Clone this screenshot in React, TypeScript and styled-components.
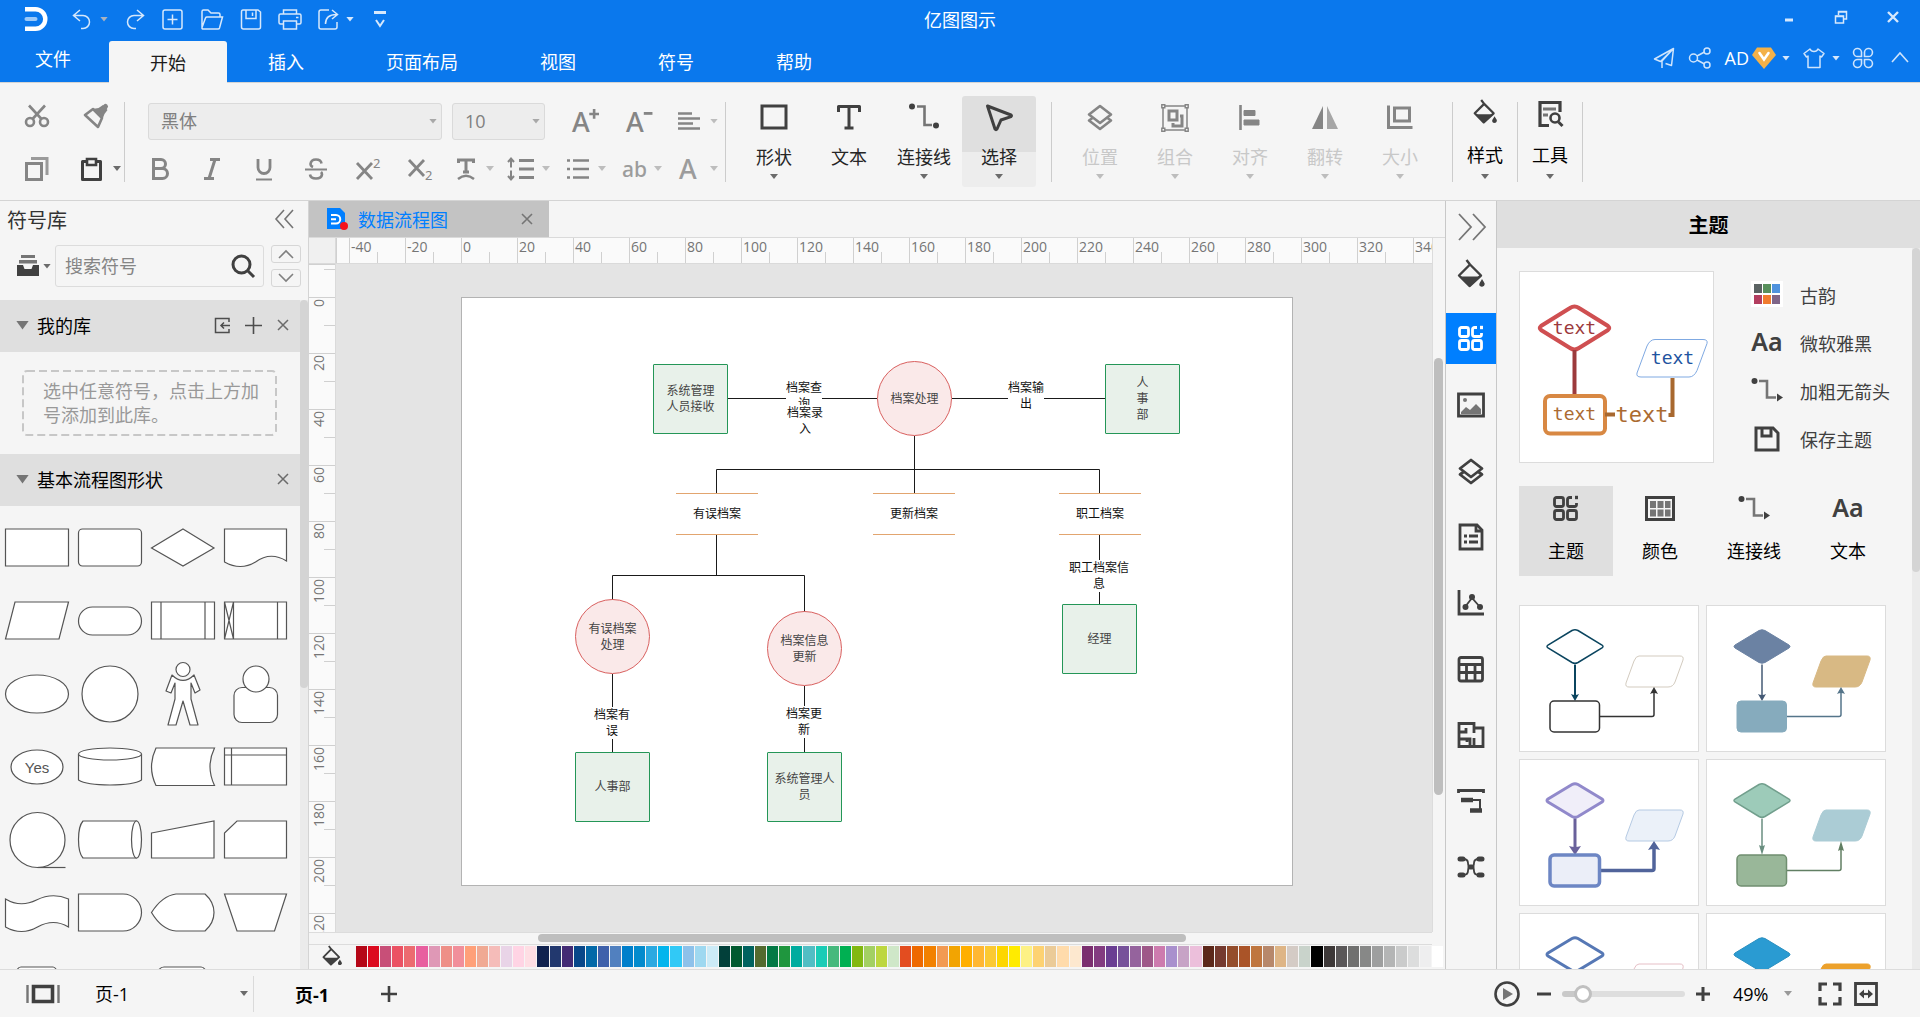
import React from "react";
import styled, { createGlobalStyle, css } from "styled-components";

const BLUE = "#0a78ed";
const PANEL = "#f5f5f5";
const LINE = "#d4d4d4";
const HEAD = "#dfdfdf";
const DARK = "#404040";
const GREY = "#858585";

const GlobalStyle = createGlobalStyle`
  * { box-sizing: border-box; }
  body { margin: 0; background: ${PANEL}; overflow: hidden; }
  body, button, input, select {
    font-family: "Open Sans", "Noto Sans CJK SC", sans-serif;
    font-size: 18px;
    color: #1c1c1c;
  }
  button { border: 0; padding: 0; background: none; cursor: pointer; white-space: nowrap; }
  svg { display: block; flex: none; overflow: visible; }
`;

const Shell = styled.div`
  display: flex;
  flex-direction: column;
  height: 100vh;
`;

/* ---------- generic pieces ---------- */

type IconProps = {
  w?: number;
  h?: number;
  box?: string;
  sw?: number;
  color?: string;
  children: React.ReactNode;
};

const Icon = ({ w = 24, h = w, box = "0 0 24 24", sw = 2, color = "currentColor", children }: IconProps) => (
  <svg width={w} height={h} viewBox={box} fill="none" stroke={color} strokeWidth={sw} aria-hidden="true">
    {children}
  </svg>
);

const Caret = styled.span<{ $color?: string }>`
  width: 8px;
  height: 5px;
  flex: none;
  background: ${(p) => p.$color ?? "#6b6b6b"};
  clip-path: polygon(0 0, 100% 0, 50% 100%);
`;

const Divider = styled.div`
  width: 1px;
  height: 80px;
  flex: none;
  background: #cccccc;
`;

const Select = styled.select`
  appearance: none;
  height: 28px;
  border: 0;
  background: transparent;
  outline: none;
`;

/* ---------- title bar ---------- */

const TitleBar = styled.header`
  flex: none;
  background: ${BLUE};
  border-bottom: 1px solid ${LINE};
  color: #fff;
`;

const TitleRow = styled.div`
  display: grid;
  grid-template-columns: 1fr auto 1fr;
  height: 41px;
`;

const QuickBar = styled.div`
  display: flex;
  align-items: center;
  gap: 13px;
  height: 38px;
  padding-left: 25px;
`;

const LogoBox = styled.div`
  width: 32px;
`;

const QuickButton = styled.button`
  display: flex;
  align-items: center;
  justify-content: flex-start;
  gap: 4px;
  color: #d6e8fc;
`;

const Title = styled.h1`
  margin: 0;
  font-size: 18px;
  font-weight: 400;
  line-height: 41px;
`;

const WindowButtons = styled.div`
  display: flex;
  justify-content: flex-end;
  height: 34px;
  padding-right: 1px;
`;

const WindowButton = styled.button`
  display: flex;
  align-items: center;
  justify-content: center;
  width: 52px;
  color: #d6e8fc;
`;

const TabRow = styled.nav`
  display: flex;
  height: 41px;
`;

const MenuTab = styled.button<{ $active?: boolean }>`
  height: 41px;
  padding: 2px 41px 0;
  line-height: 39px;
  color: ${(p) => (p.$active ? "#1c1c1c" : "#fff")};
  ${(p) => p.$active && css`
    height: 42px;
    background: ${PANEL};
    border-radius: 3px 3px 0 0;
  `}
`;

const FileTab = styled.button`
  width: 109px;
  height: 36px;
  padding-right: 3px;
  line-height: 36px;
  color: #fff;
`;

const AccountBar = styled.div`
  display: flex;
  align-items: center;
  gap: 13px;
  height: 34px;
  margin-left: auto;
  padding-right: 10px;
`;

const AccountButton = styled.button<{ $gap?: number }>`
  display: flex;
  align-items: center;
  gap: ${(p) => p.$gap ?? 7}px;
  color: #cfe4fc;
`;

const UserName = styled.span`
  color: #fff;
  margin-right: -3px;
`;

const Logo = () => (
  <svg width="22" height="24" viewBox="0 0 22 24" fill="none" aria-hidden="true">
    <path d="M0 2.200h10.500a9.800 9.800 0 0 1 0 19.600H0" stroke="#fff" strokeWidth="4.400" />
    <path d="M1.500 12h9" stroke="#9cc9f8" strokeWidth="4" strokeLinecap="round" />
  </svg>
);

const quickIcons: { name: string; caret?: string; draw: React.ReactNode }[] = [
  { name: "撤销", caret: "#a9b2bf", draw: <path d="M10 3 3.500 8.500 10 14M4 8.500h9a6.500 6.500 0 0 1 0 13h-2" /> },
  { name: "重做", draw: <path d="m16 3 6.500 5.500L16 14M22 8.500h-9a6.500 6.500 0 0 0 0 13h2" /> },
  { name: "新建", draw: <><rect x="3" y="3" width="19" height="19" rx="2" /><path d="M12.500 7.500v10M7.500 12.500h10" /></> },
  { name: "打开", draw: <path d="M3 20V4.500Q3 3 4.500 3H9l3 3h7.500Q21 6 21 7.500V10M3 20.500 6.500 11q.4-1 1.500-1h15.500L20.500 21q-.3 1-1.500 1H4.500Q2.500 22 3 20.500Z" /> },
  { name: "保存", draw: <><path d="M5 3h15l2.500 2v15q0 2-2 2h-15q-2 0-2-2V5q0-2 1.500-2Z" /><path d="M8 3v8.500h10V3M14.500 5.500v3.500" /></> },
  { name: "打印", draw: <><path d="M6.500 7V3h13v4M6.500 17H3.500q-1.500 0-1.500-1.500v-7Q2 7 3.500 7h19Q24 7 24 8.500v7q0 1.500-1.500 1.500h-3" /><path d="M6.500 14h13v8h-13zM19 10.500h2.500" /></> },
  { name: "导出", caret: "#d6e8fc", draw: <path d="M13 3H5Q3 3 3 5v15q0 2 2 2h14q2 0 2-2v-5M9.500 17q0-9.500 11-9.500M16 3l5.500 4.500L16 12" /> },
];

const Header = () => (
  <TitleBar>
    <TitleRow>
      <QuickBar>
        <LogoBox><Logo /></LogoBox>
        {quickIcons.map((q) => (
          <QuickButton key={q.name} aria-label={q.name}>
            <Icon w={26} h={25} box="0 0 26 25" sw={1.5}>{q.draw}</Icon>
            {q.caret && <Caret $color={q.caret} />}
          </QuickButton>
        ))}
        <QuickButton aria-label="自定义">
          <Icon w={26} h={25} box="0 0 26 25" sw={2}><path d="M7 5.500h12" strokeWidth="3" /><path d="m9 13 4 6 4-6" /></Icon>
        </QuickButton>
      </QuickBar>
      <Title>亿图图示</Title>
      <WindowButtons>
        <WindowButton aria-label="最小化"><Icon w={14} h={14} box="0 0 14 14" sw={3}><path d="M3 10h8" /></Icon></WindowButton>
        <WindowButton aria-label="还原"><Icon w={14} h={14} box="0 0 14 14" sw={1.5}><path d="M1.500 6h8v7h-8z" /><path d="M1.500 6.500h8M4.500 5V1.500h8V9H10M4.500 2h8" /></Icon></WindowButton>
        <WindowButton aria-label="关闭"><Icon w={14} h={14} box="0 0 14 14" sw={2.4}><path d="m2 2 10 10M12 2 2 12" /></Icon></WindowButton>
      </WindowButtons>
    </TitleRow>
    <TabRow>
      <FileTab>文件</FileTab>
      <MenuTab $active>开始</MenuTab>
      {["插入", "页面布局", "视图", "符号", "帮助"].map((t) => <MenuTab key={t}>{t}</MenuTab>)}
      <AccountBar>
        <AccountButton aria-label="发送">
          <Icon w={22} h={22} box="0 0 22 22" sw={1.5}><path d="M20.500 1.500 1.500 12l6 2.500zM20.500 1.500 7.500 14.500M20.500 1.500l-2 17-6-2M20.500 1.500 9 14v7" strokeLinejoin="round" /></Icon>
        </AccountButton>
        <AccountButton aria-label="分享">
          <Icon w={24} h={22} box="0 0 24 22" sw={1.5}><circle cx="5.500" cy="11" r="4" /><circle cx="19" cy="4" r="3" /><circle cx="19" cy="18" r="3" /><path d="m9 9 7.500-4M9 13l7.500 4" /></Icon>
        </AccountButton>
        <AccountButton $gap={6}>
          <UserName>AD</UserName>
          <svg width="24" height="22" viewBox="0 0 24 22" fill="none" aria-hidden="true">
            <path d="M5 .5h14l5 7.500-12 14L0 8z" fill="#f3b148" />
            <path d="m7.500 6 4.500 6.500L16.500 6" stroke="#fff" strokeWidth="2.600" strokeLinecap="round" />
          </svg>
          <Caret $color="#d6e8fc" />
        </AccountButton>
        <AccountButton aria-label="皮肤">
          <Icon w={22} h={22} box="0 0 22 22" sw={1.5}><path d="m7 2-6 4.500L3.500 10 5 9v11.500h12V9l1.500 1L21 6.500 15 2q-1 2.500-4 2.500T7 2Z" strokeLinejoin="round" /></Icon>
          <Caret $color="#d6e8fc" />
        </AccountButton>
        <AccountButton aria-label="应用">
          <Icon w={20} h={22} box="0 0 20 22" sw={1.6}>
            <path d="M8.500 9.500H5A4 4 0 1 1 8.500 5zM11.500 9.500H15A4 4 0 1 0 11.500 5zM8.500 12.500H5A4 4 0 1 0 8.500 17zM11.500 12.500H15A4 4 0 1 1 11.500 17z" />
          </Icon>
        </AccountButton>
        <AccountButton aria-label="收起功能区">
          <Icon w={24} h={22} box="0 0 24 22" sw={1.6}><path d="m6 15 8-9 8 9" /></Icon>
        </AccountButton>
      </AccountBar>
    </TabRow>
  </TitleBar>
);

/* ---------- ribbon ---------- */

const Ribbon = styled.div`
  flex: none;
  display: flex;
  align-items: center;
  height: 118px;
  border-bottom: 1px solid ${LINE};
  background: ${PANEL};
`;

const Clipboard = styled.div`
  display: grid;
  grid-template-columns: 49px 40px;
  grid-template-rows: 28px 26px;
  column-gap: 7px;
  row-gap: 26px;
  width: 124px;
  padding-left: 25px;
`;

const ToolButton = styled.button<{ $dark?: boolean }>`
  display: flex;
  align-items: center;
  gap: 8px;
  color: ${(p) => (p.$dark ? DARK : GREY)};
`;

const FontGroup = styled.div`
  display: flex;
  flex-direction: column;
  gap: 17px;
  margin-left: 23px;
  padding-right: 7px;
  width: 577px;
`;

const FontRow = styled.div`
  display: flex;
  align-items: center;
  justify-content: space-between;
`;

const PickerPair = styled.div`
  display: flex;
  gap: 10px;
`;

const Picker = styled.label<{ $w: number }>`
  display: flex;
  align-items: center;
  width: ${(p) => p.$w}px;
  height: 37px;
  padding: 0 4px 0 12px;
  border: 1px solid #dadada;
  border-radius: 3px;
  background: #ededed;
  select { flex: 1; min-width: 0; color: #808080; padding: 0; }
`;

const FormatSet = styled.div`
  display: flex;
  align-items: center;
  gap: 28px;
`;

const DropSet = styled.div`
  display: flex;
  gap: 16px;
`;

const BigGroup = styled.div`
  display: flex;
  gap: 1px;
  padding: 0 15px 0 11px;
`;

const BigButton = styled.button<{ $active?: boolean; $narrow?: boolean; $muted?: boolean }>`
  display: flex;
  flex-direction: column;
  align-items: center;
  width: ${(p) => (p.$narrow ? 64 : 74)}px;
  height: 91px;
  padding-top: ${(p) => (p.$narrow ? 3 : 7)}px;
  border-radius: 3px;
  color: ${(p) => (p.$muted ? GREY : DARK)};
  ${(p) => p.$active && css`background: linear-gradient(#dfdfdf 56px, #ededed 56px);`}
`;

const BigLabel = styled.span<{ $muted?: boolean; $narrow?: boolean }>`
  margin: ${(p) => (p.$narrow ? "11px 0 4px" : "9px 0 2px")};
  line-height: 30px;
  color: ${(p) => (p.$muted ? "#c8c8c8" : p.$narrow ? "#000" : "#262626")};
`;

const bucket = (
  <>
    <path d="M9.500 0 13 4.500 24 15.500 12.500 26 2 15.500 13 4.500" strokeLinejoin="round" />
    <path d="M3 16.500h20.500L12.500 27z" fill="currentColor" stroke="none" />
    <path d="M25 19q5 7 0 7.500t0-7.500Z" fill="currentColor" stroke="none" />
    <circle cx="25" cy="24" r="2.500" fill="currentColor" stroke="none" />
  </>
);

const layers = (
  <>
    <path d="M14 3 25 11.500 14 20 3 11.500z" strokeLinejoin="round" />
    <path d="m6.500 15-3.500 2.500L14 26l11-8.500-3.500-2.500" strokeLinejoin="round" />
  </>
);

type Big = { label: string; caret?: boolean; active?: boolean; draw: React.ReactNode };

const insertTools: Big[] = [
  { label: "形状", caret: true, draw: <rect x="2" y="3" width="24" height="22" strokeWidth="3" /> },
  { label: "文本", draw: <path d="M3.500 9V3.500h21V9M14 3.500v22M9.500 25h9" strokeWidth="3" strokeLinejoin="round" /> },
  { label: "连接线", caret: true, draw: <><path d="M7 3.500h7.500V22H22" strokeWidth="2.600" stroke="#757575" /><circle cx="2" cy="3.500" r="3" fill="currentColor" stroke="none" /><circle cx="26" cy="22.500" r="3" fill="currentColor" stroke="none" /></> },
  { label: "选择", caret: true, active: true, draw: <path d="M2.500 3 26 12q1 .8 0 1.600L16 17l-4 9q-1 1.500-2 0z" strokeWidth="3" strokeLinejoin="round" /> },
];

const arrangeTools: Big[] = [
  { label: "位置", caret: true, draw: layers },
  { label: "组合", caret: true, draw: <><path d="M2 3h24v24H2z" strokeWidth="1.500" /><path d="M8 8h8v9H8zM19 13h2v10h-9v-3" strokeWidth="3" /><path d="M.8 1.800h3v3h-3zM24.200 1.800h3v3h-3zM.8 25.200h3v3h-3zM24.200 25.200h3v3h-3z" strokeWidth="1.400" fill={PANEL} /></> },
  { label: "对齐", caret: true, draw: <><path d="M4.500 2v25" /><path d="M8 7.500h11v5H8zM8 17h15v5H8z" fill="currentColor" strokeWidth="1" /></> },
  { label: "翻转", caret: true, draw: <><path d="M12 3v23H1z" fill="currentColor" stroke="none" /><path d="M16 3v23h11z" fill="#a6a6a6" stroke="none" /></> },
  { label: "大小", caret: true, draw: <><path d="M8.500 5h15v13h-15z" strokeWidth="3" /><path d="M2.500 2.500v22h24" strokeWidth="3" /></> },
];

const styleTool = <g transform="translate(2 1) scale(.86)">{bucket}</g>;
const toolTool = (
  <>
    <path d="M13 26.500H4v-23h20V13" strokeWidth="3.200" />
    <path d="M7 10h13M7 16h5" strokeWidth="3" stroke="#757575" />
    <circle cx="19" cy="19" r="4.500" />
    <path d="m22.500 23 4 4" strokeWidth="3" />
  </>
);

const BigTool = ({ t, muted, narrow }: { t: Big; muted?: boolean; narrow?: boolean }) => (
  <BigButton $active={t.active} $muted={muted} $narrow={narrow}>
    <Icon w={28} h={30} box="0 0 28 30" sw={2.6}>{t.draw}</Icon>
    <BigLabel $muted={muted} $narrow={narrow}>{t.label}</BigLabel>
    {t.caret && <Caret $color={muted ? "#bdbdbd" : "#6b6b6b"} />}
  </BigButton>
);

const glyph = { fontFamily: '"Noto Sans", sans-serif', stroke: "none", fill: "currentColor" };

const formatIcons: { name: string; draw: React.ReactNode }[] = [
  { name: "加粗", draw: <path d="M5.500 2.500H13a4.500 4.500 0 0 1 0 9H5.500zM5.500 11.500h9a5 5 0 0 1 0 10h-9z" strokeWidth="3" /> },
  { name: "斜体", draw: <path d="M10 2.500h10M4 21.500h10M15 2.500l-6 19" strokeWidth="3" /> },
  { name: "下划线", draw: <><path d="M6 2v8.500a6 6 0 0 0 12 0V2" strokeWidth="2.800" /><path d="M4 22.500h16" /></> },
  { name: "删除线", draw: <><path d="M17.500 6.500Q17 2.500 12 2.500T6.500 7Q6.500 9 9 10M6 17.500Q6.500 21.500 12 21.500t6-4q0-1.500-1-2.500" strokeWidth="2.600" /><path d="M1 12.500h22" /></> },
  { name: "上标", draw: <><path d="m1 6 15 16M16 6 1 22" strokeWidth="2.800" /><text x="17" y="11" fontSize="13" {...glyph}>2</text></> },
  { name: "下标", draw: <><path d="m1 3 15 16M16 3 1 19" strokeWidth="2.800" /><text x="17" y="23" fontSize="13" {...glyph}>2</text></> },
];

const dropIcons: { name: string; draw: React.ReactNode }[] = [
  { name: "字体颜色", draw: <><path d="M4.500 6V3h15v3M12 3v12M9 15h6" strokeWidth="3" /><path d="M4 22q8-6.500 16 0" strokeWidth="2.400" /></> },
  { name: "行距", draw: <><path d="M9 3.500h15M9 12h15M9 20.500h15" strokeWidth="2.800" /><path d="M1 1.500v9M1 13.500v9M-2 5l3-3.500L4 5M-2 19l3 3.500L4 19" /></> },
  { name: "项目符号", draw: <><path d="M7 3.500h16M7 12h16M7 20.500h16" strokeWidth="2.600" /><path d="M1 3.500h3M1 12h3M1 20.500h3" strokeWidth="2.600" /></> },
  { name: "大小写", draw: <text x="0" y="20" fontSize="21" fontWeight="500" {...glyph} fill="#9c9c9c">ab</text> },
  { name: "高亮", draw: <text x="1" y="22" fontSize="27" fontWeight="500" {...glyph} fill="#9c9c9c">A</text> },
];

const RibbonBar = () => (
  <Ribbon>
    <Clipboard>
      <ToolButton aria-label="剪切">
        <Icon sw={2.6}><circle cx="5" cy="18" r="4" /><circle cx="19" cy="18" r="4" /><path d="M4 1.500 16.500 15M20 1.500 7.500 15" /></Icon>
      </ToolButton>
      <ToolButton aria-label="格式刷">
        <Icon w={28} h={26} box="-2 0 28 26" sw={2.6}><path d="M2 12 10 6l9 9-4 9z" strokeLinejoin="round" /><path d="m9.500 6 10 10 2-5 3-4-4.500-5-4.500 3z" fill="currentColor" stroke="none" /><path d="m19 7 3.500-3.500" strokeWidth="5" strokeLinecap="round" /></Icon>
      </ToolButton>
      <ToolButton aria-label="复制">
        <Icon sw={3}><path d="M1.500 6.500h15v16h-15z" /><path d="M6 1.500h16V18" stroke="#9a9a9a" /></Icon>
      </ToolButton>
      <ToolButton aria-label="粘贴" $dark>
        <Icon sw={3}><path d="M1.500 4.500h18v18h-18z" strokeLinejoin="round" /><path d="M6 2h9v6H6z" fill={PANEL} strokeWidth="2.600" /></Icon>
        <Caret />
      </ToolButton>
    </Clipboard>
    <Divider />
    <FontGroup>
      <FontRow>
        <FormatSet>
          <PickerPair>
            <Picker $w={294}>
              <Select aria-label="字体" defaultValue="黑体"><option>黑体</option></Select>
              <Caret $color="#a8a8a8" />
            </Picker>
            <Picker $w={93}>
              <Select aria-label="字号" defaultValue="10"><option>10</option></Select>
              <Caret $color="#a8a8a8" />
            </Picker>
          </PickerPair>
          <ToolButton aria-label="增大字号"><Icon w={26} box="0 0 24 24"><text x="-1" y="22" fontSize="25" fontWeight="500" {...glyph}>A</text><path d="M15 5.500h9M19.500 1v9" strokeWidth="2.400" /></Icon></ToolButton>
          <ToolButton aria-label="减小字号"><Icon w={26} box="0 0 24 24"><text x="-1" y="22" fontSize="25" fontWeight="500" {...glyph}>A</text><path d="M15.500 5h8" strokeWidth="2.600" /></Icon></ToolButton>
        </FormatSet>
        <ToolButton aria-label="对齐方式">
          <Icon sw={2.6}><path d="M0 4.500h14M0 9.500h22M0 14.500h15M0 19.500h22" /></Icon>
          <Caret $color="#bdbdbd" />
        </ToolButton>
      </FontRow>
      <FontRow>
        <FormatSet>
          {formatIcons.map((f) => <ToolButton key={f.name} aria-label={f.name}><Icon>{f.draw}</Icon></ToolButton>)}
        </FormatSet>
        <DropSet>
          {dropIcons.map((f) => (
            <ToolButton key={f.name} aria-label={f.name}>
              <Icon>{f.draw}</Icon>
              <Caret $color="#bdbdbd" />
            </ToolButton>
          ))}
        </DropSet>
      </FontRow>
    </FontGroup>
    <Divider />
    <BigGroup>{insertTools.map((t) => <BigTool key={t.label} t={t} />)}</BigGroup>
    <Divider />
    <BigGroup>{arrangeTools.map((t) => <BigTool key={t.label} t={t} muted />)}</BigGroup>
    <Divider />
    <BigTool t={{ label: "样式", caret: true, draw: styleTool }} narrow />
    <Divider />
    <BigTool t={{ label: "工具", caret: true, draw: toolTool }} narrow />
    <Divider />
  </Ribbon>
);

/* ---------- symbol library ---------- */

const Body = styled.div`
  flex: 1;
  min-height: 0;
  display: flex;
`;

const Library = styled.aside`
  flex: none;
  display: flex;
  flex-direction: column;
  width: 309px;
  border-right: 1px solid ${LINE};
`;

const LibHead = styled.div`
  display: flex;
  align-items: center;
  justify-content: space-between;
  height: 36px;
  padding: 0 14px 0 7px;
`;

const LibTitle = styled.h2`
  margin: 0;
  font-size: 20px;
  font-weight: 400;
  color: #333;
`;

const SearchRow = styled.div`
  display: flex;
  align-items: center;
  height: 63px;
  padding: 0 7px 5px 17px;
`;

const DrawerButton = styled.button`
  display: flex;
  align-items: center;
  gap: 4px;
  width: 38px;
  color: ${DARK};
`;

const SearchBox = styled.label`
  display: flex;
  align-items: center;
  width: 209px;
  height: 42px;
  padding: 0 8px 0 9px;
  border: 1px solid #dcdcdc;
  border-radius: 3px;
  color: ${DARK};
  input {
    flex: 1;
    min-width: 0;
    padding: 0;
    border: 0;
    background: none;
    outline: none;
  }
  input::placeholder { color: #858585; opacity: 1; }
`;

const StepColumn = styled.div`
  display: flex;
  flex-direction: column;
  gap: 6px;
  margin-left: auto;
`;

const StepButton = styled.button`
  display: flex;
  align-items: center;
  justify-content: center;
  width: 30px;
  height: 18px;
  border: 1px solid #d6d6d6;
  border-radius: 3px;
  color: #808080;
`;

const ScrollArea = styled.div`
  flex: 1;
  min-height: 0;
  display: flex;
`;

const ScrollContent = styled.div`
  flex: 1;
  min-width: 0;
  overflow: hidden;
`;

const Track = styled.div`
  flex: none;
  width: 8px;
  background: #ebebeb;
`;

const Thumb = styled.div<{ $share: number }>`
  height: ${(p) => p.$share}%;
  border-radius: 4px;
  background: #d4d4d4;
`;

const SectionHead = styled.div`
  display: flex;
  align-items: center;
  gap: 8px;
  height: 52px;
  padding: 0 10px 2px 16px;
  background: ${HEAD};
  color: #4d4d4d;
`;

const Fold = styled.span`
  width: 13px;
  height: 9px;
  background: #757575;
  clip-path: polygon(0 0, 100% 0, 50% 100%);
`;

const SectionTitle = styled.h3`
  flex: 1;
  margin: 0;
  font-size: 18px;
  font-weight: 400;
  color: #000;
`;

const SectionTools = styled.div`
  display: flex;
  align-items: center;
  gap: 14px;
  button { color: #4d4d4d; }
`;

const HintArea = styled.div`
  height: 102px;
  padding: 18px 23px 18px 22px;
`;

const Hint = styled.p`
  position: relative;
  margin: 0;
  height: 66px;
  padding: 9px 16px 9px 21px;
  font-size: 18px;
  line-height: 24px;
  color: #999;
  svg { position: absolute; inset: 0; width: 100%; height: 100%; }
`;

const ShapeGrid = styled.div`
  display: grid;
  grid-template-columns: repeat(4, 73px);
  padding-top: 5px;
`;

const ShapeButton = styled.button`
  width: 73px;
  height: 73px;
`;

const shapes: { name: string; draw: React.ReactNode }[] = [
  { name: "流程", draw: <path d="M5.500 18h63v37h-63z" /> },
  { name: "圆角流程", draw: <rect x="5.500" y="18" width="63" height="37" rx="4" /> },
  { name: "判定", draw: <path d="M37 18 68 37 37 55 5.500 37z" /> },
  { name: "文档", draw: <path d="M5.500 18h62v32q-16-10-31 1-15 9-31 0z" /> },
  { name: "数据", draw: <path d="M15 18h53.500L59 55H5.500z" /> },
  { name: "起止", draw: <rect x="5.500" y="23" width="63" height="28" rx="14" /> },
  { name: "子流程", draw: <path d="M5.500 18h63v37h-63zM15 18v37M59 18v37" /> },
  { name: "预处理", draw: <path d="M5.500 18h62v37h-62zM14.500 18v37M58.500 18v37M5.500 18l9 37M14.500 18l-9 37" /> },
  { name: "椭圆", draw: <ellipse cx="37" cy="37" rx="31.500" ry="19" /> },
  { name: "圆", draw: <circle cx="37" cy="37" r="28" /> },
  { name: "人", draw: <><circle cx="37" cy="12.500" r="7" /><path d="M26 18q11 11 22 0l6 15-5 3-4-10v16l7 26h-8L37 44l-7 24h-8l7-26V26l-4 10-5-2z" strokeLinejoin="round" /></> },
  { name: "用户", draw: <><rect x="15" y="30.500" width="43.500" height="35" rx="8" /><circle cx="37" cy="22" r="13" /></> },
  { name: "是", draw: <><ellipse cx="37" cy="37" rx="26" ry="17" /><text x="37" y="43" fontSize="15" textAnchor="middle" fill="#555" stroke="none" fontFamily='"Liberation Sans", sans-serif'>Yes</text></> },
  { name: "数据库", draw: <><path d="M5.500 24v26q8 5 31.500 5t31.500-5V24" /><ellipse cx="37" cy="24" rx="31.500" ry="6" /></> },
  { name: "存储数据", draw: <path d="M10 18h58.500q-9 18.500 0 37.500H10q-9-18.500 0-37.500z" /> },
  { name: "内部存储", draw: <path d="M5.500 18h62v37h-62zM12.500 18v37M5.500 25h62" /> },
  { name: "顺序数据", draw: <><circle cx="37.500" cy="37" r="27.500" /><path d="M37.500 64.500h28" /></> },
  { name: "直接数据", draw: <><path d="M64 18H10Q5.500 23 5.500 36.500T10 55h54" /><ellipse cx="63.500" cy="36.500" rx="5" ry="18.500" /></> },
  { name: "手动输入", draw: <path d="M5.500 30 68 18v37H5.500z" /> },
  { name: "卡片", draw: <path d="M18 18h49.500v37h-62V30z" /> },
  { name: "条带", draw: <path d="M5.500 23q15 9 31 1t32-1v28q-15-9-31 0t-32 0z" /> },
  { name: "延迟", draw: <path d="M5.500 18H50a18.500 18.500 0 0 1 0 37H5.500z" /> },
  { name: "显示", draw: <path d="M30 18h29q9 8 9 18.500T59 55H30Q16 54 5.500 36.500 16 20 30 18z" /> },
  { name: "手动操作", draw: <path d="M5.500 18h62l-12 37H18z" /> },
  { name: "预备", draw: <path d="M16 25q1-7 5-7h32q3 0 5 7v10H16z" /> },
  { name: "空", draw: null },
  { name: "循环", draw: <path d="M11 25q2-7 7-7h37q4 0 6 7v10H11z" /> },
];

const LibraryPanel = () => (
  <Library>
    <LibHead>
      <LibTitle>符号库</LibTitle>
      <button aria-label="收起"><Icon w={20} h={20} box="0 0 20 20" sw={1.6} color="#757575"><path d="M10 1 2 10l8 9M19 1l-8 9 8 9" /></Icon></button>
    </LibHead>
    <SearchRow>
      <DrawerButton aria-label="符号库列表">
        <Icon w={22} h={22} box="0 0 22 22" sw={0}><path d="M4 0h14v3H4zM2 5h18v3.500H2z" fill="#757575" /><path d="M0 10h6l1.500 4h7L16 10h6v11H0z" fill="currentColor" /></Icon>
        <Caret />
      </DrawerButton>
      <SearchBox>
        <input aria-label="搜索符号" placeholder="搜索符号" />
        <Icon sw={3}><circle cx="10.500" cy="10.500" r="8.500" /><path d="m16.500 16.500 6.500 6.500" /></Icon>
      </SearchBox>
      <StepColumn>
        <StepButton aria-label="上一个"><Icon w={16} h={10} box="0 0 16 10" sw={1.6}><path d="m1 9 7-7 7 7" /></Icon></StepButton>
        <StepButton aria-label="下一个"><Icon w={16} h={10} box="0 0 16 10" sw={1.6}><path d="m1 1 7 7 7-7" /></Icon></StepButton>
      </StepColumn>
    </SearchRow>
    <ScrollArea>
      <ScrollContent>
        <SectionHead>
          <Fold />
          <SectionTitle>我的库</SectionTitle>
          <SectionTools>
            <button aria-label="导入"><Icon w={17} h={17} box="0 0 17 17" sw={1.5}><path d="M15 5V1.500H1.500v14H15V12M16 8.500H7M10 5.500 7 8.500l3 3" /></Icon></button>
            <button aria-label="添加"><Icon w={17} h={17} box="0 0 17 17" sw={1.6}><path d="M8.500 0v17M0 8.500h17" /></Icon></button>
            <button aria-label="关闭我的库"><Icon w={14} h={14} box="0 0 14 14" sw={1.5} color="#6b6b6b"><path d="m2 2 10 10M12 2 2 12" /></Icon></button>
          </SectionTools>
        </SectionHead>
        <HintArea>
          <Hint>
            <svg aria-hidden="true"><rect x="1" y="1" width="253" height="64" rx="4" fill="none" stroke="#c7c7c7" strokeWidth="2" strokeDasharray="8 4" /></svg>
            选中任意符号，点击上方加号添加到此库。
          </Hint>
        </HintArea>
        <SectionHead>
          <Fold />
          <SectionTitle>基本流程图形状</SectionTitle>
          <SectionTools>
            <button aria-label="关闭基本流程图形状"><Icon w={14} h={14} box="0 0 14 14" sw={1.5} color="#6b6b6b"><path d="m2 2 10 10M12 2 2 12" /></Icon></button>
          </SectionTools>
        </SectionHead>
        <ShapeGrid>
          {shapes.map((s) => (
            <ShapeButton key={s.name} aria-label={s.name}>
              <svg width="73" height="73" viewBox="0 0 73 73" fill="#fff" stroke="#555" strokeWidth="1.200" aria-hidden="true">{s.draw}</svg>
            </ShapeButton>
          ))}
        </ShapeGrid>
      </ScrollContent>
      <Track><Thumb $share={58} /></Track>
    </ScrollArea>
  </Library>
);

/* ---------- drawing area ---------- */

const Center = styled.main`
  flex: 1;
  min-width: 0;
  display: flex;
  flex-direction: column;
`;

const DocTabs = styled.div`
  flex: none;
  height: 37px;
  border-bottom: 1px solid #dadada;
`;

const DocTab = styled.div`
  display: flex;
  align-items: center;
  width: 240px;
  height: 36px;
  padding: 0 15px 0 18px;
  background: #c3c3c3;
`;

const DocName = styled.button`
  flex: 1;
  margin-left: 11px;
  text-align: left;
  color: #007fff;
`;

const Sheet = styled.div`
  flex: 1;
  min-height: 0;
  display: grid;
  grid-template-columns: 27px 1fr 13px;
  grid-template-rows: 26px 1fr 13px;
`;

const Corner = styled.div`
  background: #f0f0f0;
  border-right: 1px solid #dadada;
  border-bottom: 1px solid #dadada;
`;

const HRuler = styled.div`
  display: flex;
  overflow: hidden;
  background: #fafafa;
  border-bottom: 1px solid #dadada;
`;

const VRuler = styled.div`
  display: flex;
  flex-direction: column;
  overflow: hidden;
  background: #fafafa;
  border-right: 1px solid #dadada;
`;

const HMark = styled.div<{ $len: number }>`
  position: relative;
  flex: none;
  width: ${(p) => p.$len}px;
  padding-left: 1px;
  border-left: 1px solid #d0d0d0;
  font-size: 14px;
  line-height: 18px;
  color: #757575;
  &::after {
    content: "";
    position: absolute;
    left: calc(100% - 28px);
    bottom: 0;
    width: 1px;
    height: 11px;
    background: #d0d0d0;
  }
`;

const VMark = styled.div<{ $len: number }>`
  position: relative;
  flex: none;
  height: ${(p) => p.$len}px;
  padding: 1px 0 0 1px;
  border-top: 1px solid #d0d0d0;
  &::after {
    content: "";
    position: absolute;
    top: calc(100% - 28px);
    right: 0;
    width: 11px;
    height: 1px;
    background: #d0d0d0;
  }
  span {
    display: block;
    writing-mode: vertical-rl;
    transform: rotate(180deg);
    width: 18px;
    font-size: 14px;
    line-height: 18px;
    color: #757575;
  }
`;

const Canvas = styled.div`
  position: relative;
  overflow: hidden;
  background: #e4e4e4;
`;

const Page = styled.div`
  position: absolute;
  left: 125px;
  top: 33px;
  width: 832px;
  height: 589px;
  border: 1px solid #b3b3b3;
  background: #fff;
`;

const Wires = styled.svg`
  position: absolute;
  left: 0;
  top: 0;
`;

type Box = { $x: number; $y: number; $w: number; $h: number };

const place = css<Box>`
  position: absolute;
  left: ${(p) => p.$x}px;
  top: ${(p) => p.$y}px;
  width: ${(p) => p.$w}px;
  height: ${(p) => p.$h}px;
  display: flex;
  align-items: center;
  justify-content: center;
  font-size: 12px;
  line-height: 16px;
  text-align: center;
  white-space: pre-line;
`;

const Entity = styled.div<Box>`
  ${place}
  border: 1px solid #249657;
  border-radius: 1px;
  background: #e8f1ea;
  color: #454545;
`;

const Process = styled.div<Box>`
  ${place}
  border: 1px solid #d9605f;
  border-radius: 50%;
  background: #fae9e9;
  color: #454545;
`;

const Store = styled.div<Box>`
  ${place}
  border: solid #e2a56f;
  border-width: 1px 0;
  color: #111;
`;

const WireLabel = styled.div<Box>`
  ${place}
  color: #111;
  span { background: #fff; }
`;

const VTrack = styled.div`
  display: flex;
  flex-direction: column;
  grid-row: 1 / 3;
  grid-column: 3;
  padding: 120px 2px 137px 1px;
  border-left: 1px solid #dcdcdc;
  background: ${PANEL};
`;

const HTrack = styled.div`
  grid-column: 1 / 3;
  display: flex;
  padding: 1px 246px 2px 229px;
  border-top: 1px solid #dcdcdc;
  border-bottom: 1px solid #dcdcdc;
`;

const ScrollHandle = styled.div`
  flex: 1;
  border-radius: 5px;
  background: #bebebe;
`;

const PaletteBar = styled.div`
  flex: none;
  display: flex;
  align-items: center;
  height: 24px;
  padding: 0 1px 2px 13px;
  color: ${DARK};
`;

const Swatches = styled.div`
  flex: 1;
  display: flex;
  gap: 1px;
  margin-left: 14px;
`;

const Swatch = styled.button<{ $c: string }>`
  flex: 1;
  height: 21px;
  background: ${(p) => p.$c};
`;

const palette = (
  "b50717 dc0a1f c84f78 eb5264 ec6b70 e85f9f df98b6 ee8f87 f18f9b ffa079 f0a993 f5bcb9 e9d4e7 ffd4e4 fedee4 " +
  "10224f 22386e 432b74 084789 0369a8 3f61ab 5180bf 007fcb 038bcd 2ba9e1 03b5ed 31c9f6 8dc1ea 9ed8f0 ccebf7 " +
  "02403a 01592f 00625f 546a2f 037945 1f963e 00ac9f 52bec4 1accb6 46b97d 00b052 82b811 a3d063 bdd73f cfe7c8 " +
  "e34d20 ee6900 f28100 f29a52 f2a402 ffaf00 ffb733 fbc933 fdd600 ffeb00 fdf185 fdd272 ebcb98 ffdbab fde8cf " +
  "7b2f6f 833c80 6a3e92 77529a 95639d 9e5888 cd7bae a990cd c7a3c6 ecbfdb " +
  "5c281a 753a2f 944d2b aa5428 bf763f b7886b deb586 d4cbc5 c9d3cb " +
  "000000 3d3838 5a5758 70706f 878887 9e9f9f b4b5b5 cacbcb dcdddd eeeeef ffffff"
).split(" ");

const range = (from: number, to: number) =>
  Array.from({ length: (to - from) / 20 + 1 }, (_, i) => from + i * 20);

const entities: [number, number, string][] = [
  [191, 66, "系统管理\n人员接收"],
  [643, 66, "人\n事\n部"],
  [600, 306, "经理"],
  [113, 454, "人事部"],
  [305, 454, "系统管理人\n员"],
];
const processes: [number, number, string][] = [
  [415, 63, "档案处理"],
  [113, 301, "有误档案\n处理"],
  [305, 313, "档案信息\n更新"],
];
const stores: [number, string][] = [[214, "有误档案"], [411, "更新档案"], [597, "职工档案"]];
const wireLabels: [number, number, string][] = [
  [302, 82, "档案查\n询"],
  [303, 107, "档案录\n入"],
  [524, 82, "档案输\n出"],
  [597, 262, "职工档案信\n息"],
  [110, 409, "档案有\n误"],
  [302, 408, "档案更\n新"],
];

const DrawingArea = () => (
  <Center>
    <DocTabs>
      <DocTab>
        <svg width="20" height="22" viewBox="0 0 20 22" aria-hidden="true">
          <path d="M0 0h13l5 5v16H0z" fill="#007fff" />
          <path d="M4 7h5a4.200 4.200 0 0 1 0 8.500H4M4 11.300h5" fill="none" stroke="#fff" strokeWidth="2" />
          <circle cx="17" cy="18" r="4" fill="#f5131c" />
        </svg>
        <DocName>数据流程图</DocName>
        <button aria-label="关闭文档"><Icon w={14} h={14} box="0 0 14 14" sw={1.6} color="#757575"><path d="m2 2 10 10M12 2 2 12" /></Icon></button>
      </DocTab>
    </DocTabs>
    <Sheet>
      <Corner />
      <HRuler>
        <HMark $len={13} />
        {range(-40, 340).map((n) => <HMark key={n} $len={56}>{n}</HMark>)}
      </HRuler>
      <VTrack><ScrollHandle /></VTrack>
      <VRuler>
        <VMark $len={33} />
        {range(0, 220).map((n) => <VMark key={n} $len={56}><span>{n}</span></VMark>)}
      </VRuler>
      <Canvas>
        <Page>
          <Wires width="830" height="587" viewBox="0 0 830 587" fill="none" stroke="#1a1a1a" aria-hidden="true">
            <path d="M266 100.500h149M490 100.500h153M452.500 138v57M254.500 196v-24.500h383V196M254.500 236v41.500M150.500 302v-24.500h192V314M150.500 376v78M342.500 388v66M637.500 236v71" />
          </Wires>
          {wireLabels.map(([x, y, t]) => <WireLabel key={t} $x={x} $y={y} $w={80} $h={32}><span>{t}</span></WireLabel>)}
          {entities.map(([x, y, t]) => <Entity key={x + t} $x={x} $y={y} $w={75} $h={70}>{t}</Entity>)}
          {processes.map(([x, y, t]) => <Process key={t} $x={x} $y={y} $w={75} $h={75}>{t}</Process>)}
          {stores.map(([x, t]) => <Store key={t} $x={x} $y={195} $w={82} $h={42}>{t}</Store>)}
        </Page>
      </Canvas>
      <HTrack><ScrollHandle /></HTrack>
    </Sheet>
    <PaletteBar>
      <Icon w={20} h={20} box="0 0 28 28" sw={2.6}>{bucket}</Icon>
      <Swatches>
        {palette.map((c, i) => <Swatch key={i} $c={"#" + c} aria-label={"#" + c} />)}
      </Swatches>
    </PaletteBar>
  </Center>
);

/* ---------- side icon strip ---------- */

const Strip = styled.nav`
  flex: none;
  display: flex;
  flex-direction: column;
  width: 52px;
  padding-top: 2px;
  border-left: 1px solid #c8c8c8;
  border-right: 1px solid #c8c8c8;
`;

const StripTop = styled.div`
  display: flex;
  flex-direction: column;
  height: 110px;
`;

const StripButton = styled.button<{ $active?: boolean; $short?: boolean }>`
  display: flex;
  align-items: center;
  justify-content: center;
  flex: none;
  width: 50px;
  height: ${(p) => (p.$short ? 47 : 51)}px;
  color: ${(p) => (p.$active ? "#fff" : DARK)};
  background: ${(p) => (p.$active ? "#007fff" : "none")};
`;

const StripList = styled.div`
  display: flex;
  flex-direction: column;
  gap: 15px;
`;

const themeGrid = (
  <>
    <rect x="2.500" y="2.500" width="9" height="9" rx="2" />
    <path d="M20 2.500h-2.500a2 2 0 0 0-2 2v5a2 2 0 0 0 2 2h5a2 2 0 0 0 2-2V8" />
    <path d="M23 .8h3v3.400h-3z" fill="currentColor" stroke="none" />
    <rect x="2.500" y="15.500" width="9" height="9" rx="2" />
    <rect x="15.500" y="15.500" width="9" height="9" rx="2" />
  </>
);

const stripIcons: { name: string; active?: boolean; draw: React.ReactNode }[] = [
  { name: "主题", active: true, draw: themeGrid },
  { name: "图片", draw: <><path d="M1.500 3h25v22h-25z" /><path d="m4 21 5-5 4 3 6-6 5 5v5H4z" fill="#757575" stroke="none" /><circle cx="8" cy="9" r="2" fill="#757575" stroke="none" /></> },
  { name: "图层", draw: layers },
  { name: "备注", draw: <><path d="M3 2h17l5 5v19H3z" /><path d="M19 2v6h6" /><path d="M7 13h3M12 13h9M7 19h3M12 19h9" /></> },
  { name: "图表", draw: <><path d="M2 1v24h25" /><path d="m8 18 7-9 8 9" strokeWidth="1.800" /><circle cx="15" cy="8" r="3" fill="currentColor" stroke="none" /><circle cx="8.500" cy="18" r="3" fill="currentColor" stroke="none" /><circle cx="23" cy="18" r="3" fill="currentColor" stroke="none" /></> },
  { name: "表格", draw: <><rect x="2" y="2.500" width="23.500" height="23.500" rx="2" /><path d="M2 9.500h24M2 17.500h24M9.500 10v16M18 10v16" /></> },
  { name: "平面图", draw: <path d="M2 2.500h15v4.500h9v18.500H2zM2 11h7V7M2 18h8v3M17 6v6M17 17v8M10 18h3v7" /> },
  { name: "甘特图", draw: <><path d="M1.500 6V3.500h25V6" /><path d="M4 13h12M13 23.500h12" strokeWidth="4.500" /><path d="M15 13h8v9" strokeWidth="2" /></> },
  { name: "思维导图", draw: <><path d="M6 6q5 0 5 4t3 4 3-4 5-4M6 22q5 0 5-4t3-4 3 4 5 4" strokeWidth="1.800" /><path d="M3 6h3M22 6h3M3 22h3M22 22h3M13 14h2" strokeWidth="5" strokeLinecap="round" /></> },
];

const SideStrip = () => (
  <Strip>
    <StripTop>
      <StripButton $short aria-label="收起面板"><Icon w={30} h={28} box="0 0 30 28" sw={1.8} color="#757575"><path d="m3 1 12 13L3 27M17 1l12 13-12 13" /></Icon></StripButton>
      <StripButton $short aria-label="填充"><Icon w={28} h={28} box="0 0 28 28" sw={2.4}>{bucket}</Icon></StripButton>
    </StripTop>
    <StripList>
      {stripIcons.map((s) => (
        <StripButton key={s.name} $active={s.active} aria-label={s.name}>
          <Icon w={28} h={28} box="0 0 28 28" sw={2.8}>{s.draw}</Icon>
        </StripButton>
      ))}
    </StripList>
  </Strip>
);

/* ---------- theme panel ---------- */

const ThemePanel = styled.aside`
  flex: none;
  display: flex;
  flex-direction: column;
  width: 423px;
`;

const ThemeHead = styled.h2`
  flex: none;
  margin: 0;
  height: 47px;
  background: ${HEAD};
  font-size: 20px;
  font-weight: 700;
  line-height: 49px;
  text-align: center;
  color: #000;
`;

const ThemeContent = styled(ScrollContent)`
  padding: 23px 16px 0 22px;
`;

const Current = styled.div`
  display: flex;
  gap: 37px;
`;

const Card = styled.button`
  border: 1px solid #dcdcdc;
  background: #fff;
`;

const PreviewCard = styled(Card)`
  flex: none;
  width: 195px;
  height: 192px;
`;

const OptionList = styled.div`
  display: flex;
  flex-direction: column;
  gap: 12px;
  padding-top: 6px;
`;

const Option = styled.button`
  display: flex;
  align-items: center;
  gap: 17px;
  height: 36px;
  color: ${DARK};
`;

const KindTabs = styled.div`
  display: flex;
  margin-top: 23px;
`;

const KindTab = styled.button<{ $active?: boolean }>`
  display: flex;
  flex: none;
  flex-direction: column;
  align-items: center;
  width: 94px;
  height: 90px;
  padding-top: 9px;
  background: ${(p) => (p.$active ? HEAD : "none")};
  color: ${DARK};
`;

const KindLabel = styled.span`
  margin-top: 14px;
  line-height: 28px;
  color: #000;
`;

const ThemeGridBox = styled.div`
  display: grid;
  grid-template-columns: repeat(2, 180px);
  gap: 7px;
  margin-top: 29px;
`;

const ThemeCard = styled(Card)`
  height: 147px;
`;

type ThemeSpec = {
  name: string;
  d: [string, string, number];
  p: [string, string, number];
  r: [string, string, number];
  a: [string, number];
  b: [string, number];
  slim?: boolean;
};

const themes: ThemeSpec[] = [
  { name: "简约", d: ["#fff", "#0b455f", 1.5], p: ["#fff", "#d3cbbf", 1], r: ["#fff", "#333", 1.5], a: ["#0b455f", 2], b: ["#333", 1.5] },
  { name: "商务", d: ["#6b82a3", "#6b82a3", 1], p: ["#d8b984", "#d8b984", 1], r: ["#86abbd", "#86abbd", 1], a: ["#455a75", 1.5], b: ["#55758a", 1.5] },
  { name: "紫韵", d: ["#f0eef9", "#9189cb", 3], p: ["#ebf1f9", "#b5cae3", 1], r: ["#ebeef8", "#6d86c4", 3.5], a: ["#69619b", 3], b: ["#51649b", 3.5] },
  { name: "清新", d: ["#9dcbb9", "#729f8d", 1.5], p: ["#abccd5", "#abccd5", 1], r: ["#99b799", "#708f70", 1.5], a: ["#6a8e80", 1.5], b: ["#617f63", 1.5], slim: true },
  { name: "蓝线", d: ["#fff", "#5678b5", 3], p: ["#fff", "#e6bfc6", 1], r: ["#fff", "#5678b5", 3], a: ["#5678b5", 3], b: ["#5678b5", 3] },
  { name: "明亮", d: ["#2a9bd2", "#2a8fc0", 1], p: ["#eca12c", "#eca12c", 1], r: ["#2a9bd2", "#2a9bd2", 1], a: ["#2a8fc0", 1.5], b: ["#2a8fc0", 1.5] },
];

const ThemeSketch = ({ t }: { t: ThemeSpec }) => {
  const big = t.a[1] >= 3;
  const w = t.slim ? 3 : big ? 6 : 4;
  const h = t.slim ? 10 : big ? 9 : 7;
  return (
    <svg width="178" height="145" viewBox="1 1 178 145" fill="none" aria-hidden="true">
      <path d="M53 25.500q3-1.500 6 0L83 40q2 1.500 0 3L59 57.500q-3 1.500-6 0L29 43q-2-1.500 0-3z" fill={t.d[0]} stroke={t.d[1]} strokeWidth={t.d[2]} />
      <path d="M120 51h41q4 0 3 4l-8 22q-2 5-7 5h-39q-4 0-3-4l8-22q2-5 5-5z" fill={t.p[0]} stroke={t.p[1]} strokeWidth={t.p[2]} />
      <path d={`M56 59.500V${96 - h + 2}`} stroke={t.a[0]} strokeWidth={t.a[1]} />
      <path d={`M56 96l-${w}-${h}q${w} 2 ${2 * w} 0z`} fill={t.a[0]} />
      <path d={`M81 111.500h52q2 0 2-2V${82 + h - 2}`} stroke={t.b[0]} strokeWidth={t.b[1]} />
      <path d={`M135 82l-${w} ${h}q${w}-2 ${2 * w} 0z`} fill={t.b[0]} />
      <rect x="31" y="96" width="49.500" height="31" rx="4" fill={t.r[0]} stroke={t.r[1]} strokeWidth={t.r[2]} />
    </svg>
  );
};

const mono = '"DejaVu Sans Mono", monospace';

const connectorIcon = (
  <>
    <circle cx="3.500" cy="4" r="3" fill="currentColor" stroke="none" />
    <path d="M8 4h8v16.500h9" strokeWidth="2.600" stroke="#757575" />
    <path d="M26 16.500 32 20.500 26 24.500z" fill="currentColor" stroke="none" />
  </>
);
const aaIcon = <text x="16" y="22" fontSize="25" fontWeight="600" textAnchor="middle" {...glyph}>Aa</text>;

const ThemeSide = () => (
  <ThemePanel>
    <ThemeHead>主题</ThemeHead>
    <ScrollArea>
      <ThemeContent>
        <Current>
          <PreviewCard aria-label="当前主题">
            <svg width="193" height="190" viewBox="1 1 193 190" fill="none" aria-hidden="true">
              <path d="M51 37q4.500-3 9 0l29 18q2.500 2 0 4L60 77q-4.500 3-9 0L22 59q-2.500-2 0-4z" stroke="#cf4f51" strokeWidth="4" />
              <path d="M55.500 79v45" stroke="#9c3a3c" strokeWidth="4" />
              <rect x="26" y="125" width="60" height="37.500" rx="5" stroke="#d88843" strokeWidth="4" />
              <path d="M86 143.500h10M153.500 107v37h-4" stroke="#a8682f" strokeWidth="4" />
              <path d="M136 68.500h48q5 0 4 4l-10 27q-3 6.500-8 6.500h-48q-5 0-4-4l10-27q3-6.500 8-6.500z" stroke="#7fa9e2" />
              <g fontFamily={mono} fontSize="18" textAnchor="middle">
                <text x="55.500" y="63" fill="#9c3a3c">text</text>
                <text x="55.500" y="149" fill="#ab6b31">text</text>
                <text x="153.500" y="93" fill="#1f55a0">text</text>
                <text x="123" y="151" fontSize="22" fill="#ab6b31">text</text>
              </g>
            </svg>
          </PreviewCard>
          <OptionList>
            <Option>
              <svg width="32" height="28" viewBox="0 0 32 28" aria-hidden="true">
                <path d="M0 0h32v26H0z" fill="#fff" />
                <path d="M3 3h8v9H3z" fill="#5b6363" /><path d="M12 3h8v9h-8z" fill="#58905c" /><path d="M21 3h8v9h-8z" fill="#5093de" />
                <path d="M3 14h8v9H3z" fill="#b33e60" /><path d="M12 14h8v9h-8z" fill="#f07b2e" /><path d="M21 14h8v9h-8z" fill="#7f6588" />
              </svg>
              古韵
            </Option>
            <Option><Icon w={32} h={28} box="0 0 32 28">{aaIcon}</Icon>微软雅黑</Option>
            <Option><Icon w={32} h={28} box="0 0 32 28">{connectorIcon}</Icon>加粗无箭头</Option>
            <Option><Icon w={32} h={28} box="0 0 32 28" sw={3}><path d="M5 3h17l5 5v17H5z" /><path d="M11 3v8h9V3" /></Icon>保存主题</Option>
          </OptionList>
        </Current>
        <KindTabs>
          <KindTab $active><Icon w={28} h={28} box="0 0 28 28" sw={2.8}>{themeGrid}</Icon><KindLabel>主题</KindLabel></KindTab>
          <KindTab><Icon w={32} h={28} box="0 0 32 28" sw={3}><path d="M2.500 2.500h27v22h-27z" /><path d="M6 6h6v7H6zM13.500 6h6v7h-6zM21 6h5.500v7H21zM6 14.500h6v7H6zM13.500 14.500h6v7h-6zM21 14.500h5.500v7H21z" fill="#757575" stroke="none" /></Icon><KindLabel>颜色</KindLabel></KindTab>
          <KindTab><Icon w={32} h={28} box="0 0 32 28">{connectorIcon}</Icon><KindLabel>连接线</KindLabel></KindTab>
          <KindTab><Icon w={32} h={28} box="0 0 32 28">{aaIcon}</Icon><KindLabel>文本</KindLabel></KindTab>
        </KindTabs>
        <ThemeGridBox>
          {themes.map((t) => <ThemeCard key={t.name} aria-label={t.name}><ThemeSketch t={t} /></ThemeCard>)}
        </ThemeGridBox>
      </ThemeContent>
      <Track><Thumb $share={45} /></Track>
    </ScrollArea>
  </ThemePanel>
);

/* ---------- status bar ---------- */

const Status = styled.footer`
  flex: none;
  display: flex;
  align-items: center;
  height: 48px;
  border-top: 1px solid #dcdcdc;
  color: ${DARK};
`;

const PagePicker = styled.label`
  display: flex;
  align-items: center;
  width: 254px;
  height: 36px;
  padding: 0 5px 0 26px;
  border-right: 1px solid #dadada;
  select { flex: 1; margin-left: 35px; padding: 0; color: #000; }
`;

const PageTab = styled.button`
  margin: 0 52px 0 41px;
  font-weight: 700;
  color: #000;
`;

const ZoomBar = styled.div`
  display: flex;
  align-items: center;
  gap: 12px;
  margin-left: auto;
  padding-right: 42px;
`;

const Slider = styled.input`
  appearance: none;
  width: 123px;
  height: 18px;
  margin: 0 -2px;
  background: transparent;
  &::-webkit-slider-runnable-track {
    height: 6px;
    border-radius: 3px;
    background: linear-gradient(90deg, #c9c9c9 16%, #dedede 16%);
  }
  &::-webkit-slider-thumb {
    appearance: none;
    width: 18px;
    height: 18px;
    margin-top: -6px;
    border: 3px solid #c0c0c0;
    border-radius: 50%;
    background: #fff;
  }
`;

const ZoomPicker = styled.label`
  display: flex;
  align-items: center;
  width: 59px;
  margin: 0 14px 0 10px;
  select { flex: 1; min-width: 0; padding: 0; color: #000; }
`;

const StatusBar = () => (
  <Status>
    <PagePicker>
      <Icon w={34} h={20} box="0 0 34 20"><path d="M7.500 2.500h19v15h-19z" strokeWidth="3.600" /><path d="M1.500 1v18M32.500 1v18" strokeWidth="2.400" stroke="#757575" /></Icon>
      <Select aria-label="页面" defaultValue="页-1"><option>页-1</option></Select>
      <Caret />
    </PagePicker>
    <PageTab>页-1</PageTab>
    <button aria-label="添加页"><Icon w={16} h={16} box="0 0 16 16" sw={2.6} color={DARK}><path d="M8 0v16M0 8h16" /></Icon></button>
    <ZoomBar>
      <button aria-label="播放"><Icon w={26} h={26} box="0 0 26 26" sw={2.6} color={DARK}><circle cx="13" cy="13" r="11.500" /><path d="m9 7 10 6-10 6z" fill="#757575" stroke="none" /></Icon></button>
      <button aria-label="缩小"><Icon w={20} h={16} box="-4 0 20 16" sw={3} color={DARK}><path d="M1 8h14" /></Icon></button>
      <Slider type="range" aria-label="缩放" min={0} max={100} defaultValue={11} />
      <button aria-label="放大"><Icon w={16} h={16} box="0 0 16 16" sw={3} color={DARK}><path d="M8 1v14M1 8h14" /></Icon></button>
      <ZoomPicker>
        <Select aria-label="缩放比例" defaultValue="49%"><option>49%</option></Select>
        <Caret $color="#999" />
      </ZoomPicker>
      <button aria-label="全屏"><Icon w={24} h={24} box="0 0 24 24" sw={3.2} color={DARK}><path d="M2 9V2h7M15 2h7v7M22 15v7h-7M9 22H2v-7" /></Icon></button>
      <button aria-label="适合宽度"><Icon w={24} h={24} box="0 0 24 24" sw={2.8} color={DARK}><path d="M1.500 1.500h21v21h-21z" /><path d="M8 12h8" strokeWidth="2.200" /><path d="M10 7.500 5 12l5 4.500zM14 7.500l5 4.500-5 4.500z" fill={DARK} stroke="none" /></Icon></button>
    </ZoomBar>
  </Status>
);

export default function App() {
  return (
    <Shell>
      <GlobalStyle />
      <Header />
      <RibbonBar />
      <Body>
        <LibraryPanel />
        <DrawingArea />
        <SideStrip />
        <ThemeSide />
      </Body>
      <StatusBar />
    </Shell>
  );
}
